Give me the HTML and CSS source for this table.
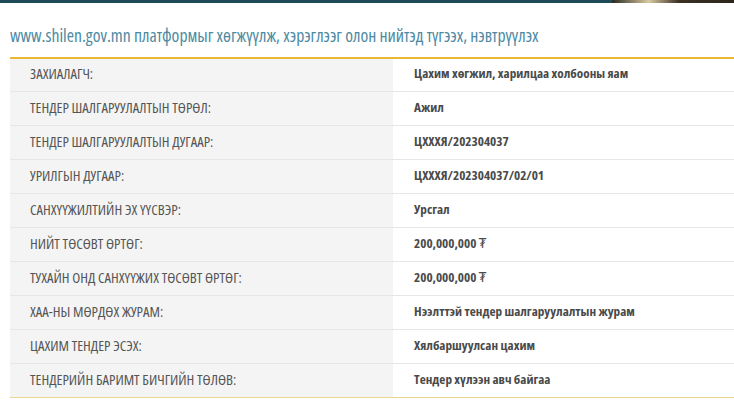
FILE: index.html
```html
<!DOCTYPE html>
<html lang="mn">
<head>
<meta charset="utf-8">
<link rel="stylesheet" href="styles.css">
</head>
<body>
<div class="topbar"><div class="topbar-line"></div><div class="topbar-img"></div></div>
<section class="content">
  <h2 class="title">www.shilen.gov.mn платформыг хөгжүүлж, хэрэглээг олон нийтэд түгээх, нэвтрүүлэх</h2>
  <table class="info">
    <tr><td class="label">ЗАХИАЛАГЧ:</td><td class="value">Цахим хөгжил, харилцаа холбооны яам</td></tr>
    <tr><td class="label">ТЕНДЕР ШАЛГАРУУЛАЛТЫН ТӨРӨЛ:</td><td class="value">Ажил</td></tr>
    <tr><td class="label">ТЕНДЕР ШАЛГАРУУЛАЛТЫН ДУГААР:</td><td class="value">ЦХХХЯ/202304037</td></tr>
    <tr><td class="label">УРИЛГЫН ДУГААР:</td><td class="value">ЦХХХЯ/202304037/02/01</td></tr>
    <tr><td class="label">САНХҮҮЖИЛТИЙН ЭХ ҮҮСВЭР:</td><td class="value">Урсгал</td></tr>
    <tr><td class="label">НИЙТ ТӨСӨВТ ӨРТӨГ:</td><td class="value">200,000,000 <span class="cur">₮</span></td></tr>
    <tr><td class="label">ТУХАЙН ОНД САНХҮҮЖИХ ТӨСӨВТ ӨРТӨГ:</td><td class="value">200,000,000 <span class="cur">₮</span></td></tr>
    <tr><td class="label">ХАА-НЫ МӨРДӨХ ЖУРАМ:</td><td class="value">Нээлттэй тендер шалгаруулалтын журам</td></tr>
    <tr><td class="label">ЦАХИМ ТЕНДЕР ЭСЭХ:</td><td class="value">Хялбаршуулсан цахим</td></tr>
    <tr><td class="label">ТЕНДЕРИЙН БАРИМТ БИЧГИЙН ТӨЛӨВ:</td><td class="value">Тендер хүлээн авч байгаа</td></tr>
  </table>
</section>
</body>
</html>
```
FILE: styles.css
```css
* { box-sizing: border-box; }
html, body { margin: 0; padding: 0; background: #fff; }
body {
  font-family: "Open Sans", "DejaVu Sans Condensed", sans-serif;
  font-stretch: 75%;
  width: 734px;
  height: 408px;
  overflow: hidden;
}
.topbar { display: flex; height: 3px; }
.topbar-line { flex: 1; background: #1c4a56; }
.topbar-img { width: 122px; background: linear-gradient(90deg, #2a2a22 0%, #d9c9a0 30%, #3a3024 55%, #2b261c 100%); }
.content { padding: 0 0 0 10px; }
.title {
  margin: 0;
  padding: 22px 0 0 0;
  height: 54px;
  font-weight: normal;
  font-size: 17.7px;
  color: #4d8aa2;
  white-space: nowrap;
  line-height: 20px;
}
.info {
  width: 724px;
  border-collapse: collapse;
  border-top: 2px solid #e9b935;
  border-bottom: 1px solid #ecd68e;
}
.info tr { height: 34px; border-top: 1px solid #e6e6e6; }
.info tr:first-child { border-top: none; height: 33px; }
.info td { padding: 0 0 3px 0; vertical-align: middle; }
.label {
  width: 383px;
  background: #f4f4f4;
  padding-left: 20px !important;
  color: #555;
  font-size: 14.7px;
}
.value {
  padding-left: 21px !important;
  font-weight: bold;
  font-size: 13.2px;
  color: #4a4a4a;
}
.cur { font-weight: normal; }
```
